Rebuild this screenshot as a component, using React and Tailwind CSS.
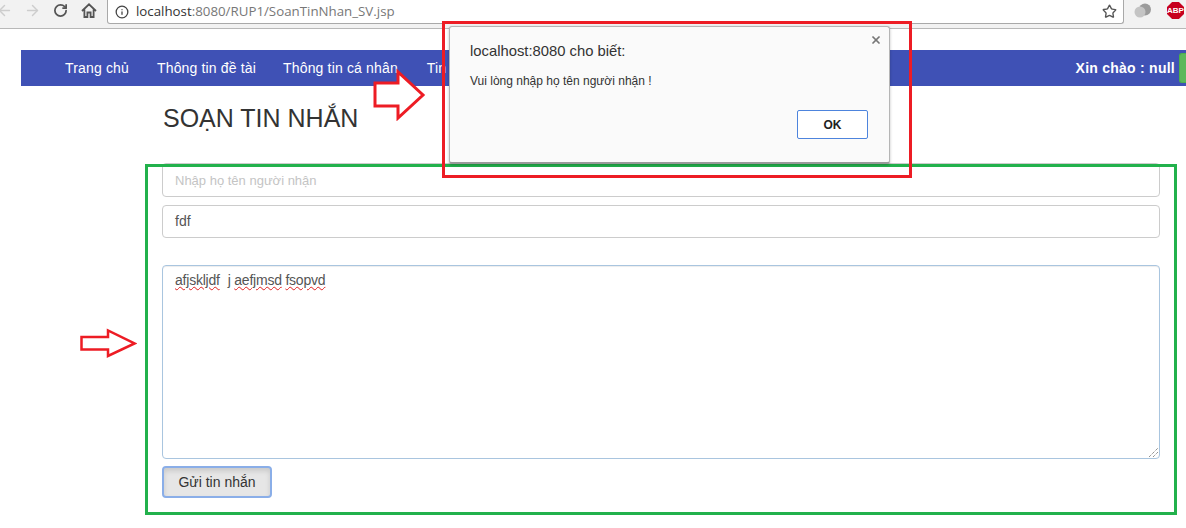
import React from "react";
import { ArrowLeft, ArrowRight, RotateCw, Info, Star, X } from "lucide-react";

export default function App() {
  return (
    <div className="relative w-[1186px] h-[528px] overflow-hidden bg-white font-['Liberation_Sans',Arial,sans-serif] text-[#333]">
      <div className="h-[29px] bg-[#f2f2f2] border-b border-[#b8b8b8] flex items-start">
        <div className="flex items-center h-[21px] gap-[11px] text-[#cdcdcd]">
          <ArrowLeft size={17} className="-ml-[4px]" strokeWidth={2} />
          <ArrowRight size={17} strokeWidth={2} />
        </div>
        <div className="flex items-center h-[21px] ml-[12px] text-[#555]">
          <RotateCw size={15} strokeWidth={2.8} />
          <svg className="ml-[13px]" width="16" height="15" viewBox="0 0 16 15" fill="none" stroke="#555" strokeWidth="1.8">
            <path d="M1 8 8 1.3 15 8M3.4 6.5V14H6.4V9.5H9.6V14H12.6V6.5" />
          </svg>
        </div>
        <div className="ml-[10px] flex-1 h-[24px] bg-white border-r border-b border-l border-[#a9a9a9] rounded-b-[3px] flex items-center pl-[7px]">
          <Info size={14} className="text-[#444]" strokeWidth={2.2} />
          <span className="ml-[7px] font-['Open_Sans',sans-serif] text-[13.3px] text-[#777]"><span className="text-[#333]">localhost</span>:8080/RUP1/SoanTinNhan_SV.jsp</span>
          <Star size={15} className="ml-auto mr-[6px] text-[#555]" strokeWidth={2.2} />
        </div>
        <div className="w-[62px] h-[21px] flex items-center shrink-0">
          <svg className="ml-[10px]" width="17" height="16" viewBox="0 0 17 16">
            <circle cx="11" cy="6.5" r="6" fill="#9b9b9b" />
            <circle cx="6" cy="9" r="5.5" fill="#c4c4c4" />
          </svg>
          <div className="ml-[16px] w-[17px] h-[17px] bg-[#c7001e] [clip-path:polygon(30%_0,70%_0,100%_30%,100%_70%,70%_100%,30%_100%,0_70%,0_30%)] text-white text-[8px] font-bold flex items-center justify-center leading-none shrink-0">ABP</div>
        </div>
      </div>

      <nav className="mt-[21px] ml-[21px] h-[36px] bg-[#3f51b5] text-white text-[14px] tracking-[0.16px] flex items-center pl-[44px]">
        <span>Trang chủ</span>
        <span className="ml-[28px]">Thông tin đề tài</span>
        <span className="ml-[27px]">Thông tin cá nhân</span>
        <span className="ml-[29px]">Tin nhắn</span>
        <span className="ml-auto mr-[4px] font-bold tracking-[0.25px]">Xin chào : null</span>
        <span className="w-[7px] h-[30px] bg-[#5cb85c] border border-[#4cae4c] border-r-0 rounded-l-[3px]" />
      </nav>

      <main className="w-[998px] ml-[162px]">
        <h1 className="mt-[19px] h-[27px] text-[25px] leading-[27px] font-normal ml-[1px]">SOẠN TIN NHẮN</h1>
        <div className="mt-[31px] h-[34px] pt-[1px] border border-[#ccc] rounded-[4px] px-[12px] flex items-center text-[13px] text-[#c4c4c4]">Nhập họ tên người nhận</div>
        <div className="mt-[8px] h-[33px] border border-[#ccc] rounded-[4px] px-[12px] flex items-center text-[14px] text-[#555]">fdf</div>
        <div className="relative mt-[27px] h-[194px] border border-[#a9c5df] rounded-[4px] px-[12px] pt-[4px] text-[14px] tracking-[-0.22px] leading-[20px] text-[#555] shadow-[inset_0_1px_1px_rgba(0,0,0,0.075)]">
          <span className="underline decoration-wavy decoration-[#e02020] decoration-1">afjskljdf</span>
          <span className="ml-[8px]">j </span>
          <span className="underline decoration-wavy decoration-[#e02020] decoration-1">aefjmsd</span>{" "}
          <span className="underline decoration-wavy decoration-[#e02020] decoration-1">fsopvd</span>
          <svg className="absolute right-[1px] bottom-[1px]" width="9" height="9" viewBox="0 0 9 9" stroke="#666" strokeWidth="1" strokeDasharray="1 1">
            <path d="M0 9 9 0M4 9 9 4" />
          </svg>
        </div>
        <button className="block mt-[7px] w-[110px] h-[32px] border-2 border-[#8aaee8] rounded-[4px] bg-[#e6e6e6] text-[14px] text-[#333] shadow-[inset_0_3px_5px_rgba(0,0,0,0.125)]">Gửi tin nhắn</button>
      </main>

      <div className="absolute left-[145px] top-[164px] w-[1032px] h-[351px] border-[3px] border-[#22b14c]" />
      <svg className="absolute left-[79px] top-[328px]" width="58" height="30" viewBox="0 0 58 30" fill="#fff" stroke="#ed1c24" strokeWidth="2.5">
        <path d="M2.5 9H29V2.5L55.5 15.5 29 28V21.5H2.5Z" />
      </svg>

      <div className="absolute left-[449px] top-[26px] w-[441px] h-[138px] bg-[#fafafa] border border-[#b5b5b5] border-b-2 border-b-[#9a9a9a] rounded-[3px] shadow-[0_1px_3px_rgba(0,0,0,0.25)] pl-[20px] pr-[21px]">
        <X size={12} strokeWidth={3.5} className="absolute right-[7px] top-[7px] text-[#777]" />
        <div className="mt-[14px] text-[14.8px] leading-[20px] text-[#333]">localhost:8080 cho biết:</div>
        <div className="mt-[12px] text-[12px] leading-[16px] text-[#333]">Vui lòng nhập họ tên người nhận !</div>
        <div className="flex justify-end mt-[21px]">
          <button className="w-[71px] h-[29px] border border-[#4d84dd] rounded-[2px] bg-white text-[12px] font-bold text-[#222]">OK</button>
        </div>
      </div>
      <div className="absolute left-[442px] top-[21px] w-[470px] h-[157px] border-[3px] border-[#ed1c24]" />
      <svg className="absolute left-[372px] top-[68px]" width="54" height="53" viewBox="0 0 54 53" fill="#fff" stroke="#ed1c24" strokeWidth="3">
        <path d="M3 15H26V4L51 27 26 50V38H3Z" />
      </svg>
    </div>
  );
}
